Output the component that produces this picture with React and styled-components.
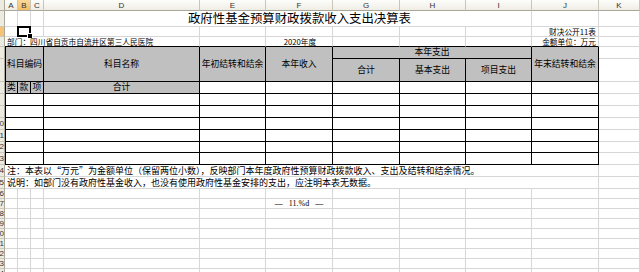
import styled, { createGlobalStyle } from 'styled-components';

const GlobalStyle = createGlobalStyle`
  html, body {
    margin: 0;
    padding: 0;
    background: #fff;
    overflow: hidden;
  }
  body {
    font-family: "Noto Sans CJK SC", "Liberation Sans", sans-serif;
    color: #000;
  }
`;

const COLS = ['A', 'B', 'C', 'D', 'E', 'F', 'G', 'H', 'I', 'J', 'K'];
const col = (l) => COLS.indexOf(l) + 2;

const Sheet = styled.div`
  display: grid;
  grid-template-columns: 5px 13px 13px 13px 156px 66px 67px 67px 66px 66px 67px 41px;
  grid-template-rows: 11px 16px 10px 10px 12px 23px 12px 12px 12px 12px 12px 11px 12px 12px 12px repeat(9, 10px);
  width: 640px;
  height: 272px;
  overflow: hidden;
`;

const Corner = styled.div`
  grid-column: 1;
  grid-row: 1;
  box-sizing: border-box;
  background: #ecebe2;
  border-right: 1px solid #aca899;
  border-bottom: 1px solid #aca899;
`;

const ColHead = styled.div`
  grid-row: 1;
  grid-column: ${(p) => p.$c};
  box-sizing: border-box;
  display: flex;
  align-items: center;
  justify-content: center;
  font-family: "Liberation Sans", "DejaVu Sans", sans-serif;
  font-size: 8px;
  color: #333;
  background: ${(p) =>
    p.$active
      ? 'linear-gradient(#fbd99c, #f5bd66)'
      : 'linear-gradient(#fdfdfb, #eeede5)'};
  border-right: 1px solid #c9c6b6;
  border-bottom: 1px solid #aca899;
`;

const RowHead = styled.div`
  grid-column: 1;
  grid-row: ${(p) => p.$r};
  box-sizing: border-box;
  display: flex;
  align-items: center;
  justify-content: flex-end;
  overflow: hidden;
  font-family: "Liberation Sans", "DejaVu Sans", sans-serif;
  font-size: 8px;
  line-height: 1;
  color: #333;
  background: ${(p) => (p.$active ? '#f7c276' : '#ecebe2')};
  border-right: 1px solid #aca899;
  border-bottom: 1px solid #cbc8b9;
`;

const Cell = styled.div`
  grid-column: ${(p) => p.$c} / span ${(p) => p.$cs || 1};
  grid-row: ${(p) => p.$r} / span ${(p) => p.$rs || 1};
  box-sizing: border-box;
  position: relative;
  display: flex;
  align-items: center;
  justify-content: ${(p) => p.$justify || 'flex-start'};
  min-width: 0;
  white-space: nowrap;
  line-height: 1;
  border-right: 1px solid #d6d6d6;
  border-bottom: 1px solid ${(p) => (p.$ink ? '#000' : '#d6d6d6')};
`;

const HeadCell = styled(Cell)`
  justify-content: center;
  background: #c0c0c0;
  font-size: 8.8px;
  border-right-color: #000;
  border-bottom-color: #000;
  border-left: ${(p) => (p.$first ? '1px solid #000' : 'none')};
`;

const BodyCell = styled(Cell)`
  background: #fff;
  border-right-color: #000;
  border-bottom-color: #000;
  border-left: ${(p) => (p.$first ? '1px solid #000' : 'none')};
`;

const NoteCell = styled(Cell)`
  padding-left: 2px;
  font-size: 9px;
`;

const TitleCell = styled(Cell)`
  justify-content: center;
  padding-left: 24px;
  font-size: 12.4px;
`;

const SmallText = styled.span`
  font-size: 7.7px;
  padding: ${(p) => (p.$right ? '0 2px 0 0' : '0 0 0 2px')};
`;

const PageMark = styled.span`
  display: flex;
  gap: 6px;
  font-family: "Liberation Serif", serif;
  font-size: 8px;
`;

const Selection = styled.div`
  position: absolute;
  top: -1px;
  left: -1px;
  right: -1px;
  bottom: -1px;
  border: 2px solid #000;

  &::after {
    content: '';
    position: absolute;
    right: -4px;
    bottom: -4px;
    width: 4px;
    height: 4px;
    background: #000;
    border: 1px solid #fff;
  }
`;

const excelRow = (line) => {
  if (line <= 5) return line - 1;
  if (line === 6) return null;
  return line;
};

const PlainRow = ({ line, skip = [], children }) => (
  <>
    {COLS.filter((l) => !skip.includes(l)).map((l) => (
      <Cell key={l} $c={col(l)} $r={line} />
    ))}
    {children}
  </>
);

export default function App() {
  const rowLines = Array.from({ length: 23 }, (_, i) => i + 2);
  const dataLines = [8, 9, 10, 11, 12, 13];
  const gridLines = [16, 17, 18, 19, 20, 21, 22, 23, 24];

  return (
    <>
      <GlobalStyle />
      <Sheet>
        <Corner />
        {COLS.map((l) => (
          <ColHead key={l} $c={col(l)} $active={l === 'B'}>
            {l}
          </ColHead>
        ))}
        {rowLines.map((line) => {
          const n = excelRow(line);
          return (
            <RowHead key={line} $r={line} $active={line === 3}>
              {n >= 10 ? n : ''}
            </RowHead>
          );
        })}

        {/* row 1: title */}
        <PlainRow line={2} skip={['D', 'E', 'F', 'G', 'H', 'I']}>
          <TitleCell $c={col('D')} $cs={6} $r={2}>
            政府性基金预算财政拨款收入支出决算表
          </TitleCell>
        </PlainRow>

        {/* row 2 */}
        <PlainRow line={3} skip={['B', 'J']}>
          <Cell $c={col('B')} $r={3}>
            <Selection />
          </Cell>
          <Cell $c={col('J')} $r={3} $justify="flex-end">
            <SmallText $right>财决公开11表</SmallText>
          </Cell>
        </PlainRow>

        {/* row 3 */}
        <Cell $c={col('A')} $cs={4} $r={4} $ink>
          <SmallText>部门：四川省自贡市自流井区第三人民医院</SmallText>
        </Cell>
        <Cell $c={col('E')} $r={4} $ink />
        <Cell $c={col('F')} $r={4} $ink $justify="center">
          <SmallText>2020年度</SmallText>
        </Cell>
        <Cell $c={col('G')} $r={4} $ink />
        <Cell $c={col('H')} $r={4} $ink />
        <Cell $c={col('I')} $r={4} $ink />
        <Cell $c={col('J')} $r={4} $ink $justify="flex-end">
          <SmallText $right>金额单位：万元</SmallText>
        </Cell>
        <Cell $c={col('K')} $r={4} />

        {/* table header */}
        <HeadCell $c={col('A')} $cs={3} $r={5} $rs={2} $first>科目编码</HeadCell>
        <HeadCell $c={col('D')} $r={5} $rs={2}>科目名称</HeadCell>
        <HeadCell $c={col('E')} $r={5} $rs={2}>年初结转和结余</HeadCell>
        <HeadCell $c={col('F')} $r={5} $rs={2}>本年收入</HeadCell>
        <HeadCell $c={col('G')} $cs={3} $r={5}>本年支出</HeadCell>
        <HeadCell $c={col('G')} $r={6}>合计</HeadCell>
        <HeadCell $c={col('H')} $r={6}>基本支出</HeadCell>
        <HeadCell $c={col('I')} $r={6}>项目支出</HeadCell>
        <HeadCell $c={col('J')} $r={5} $rs={2}>年末结转和结余</HeadCell>
        <Cell $c={col('K')} $r={5} />
        <Cell $c={col('K')} $r={6} />

        <HeadCell $c={col('A')} $r={7} $first>类</HeadCell>
        <HeadCell $c={col('B')} $r={7}>款</HeadCell>
        <HeadCell $c={col('C')} $r={7}>项</HeadCell>
        <HeadCell $c={col('D')} $r={7}>合计</HeadCell>
        {['E', 'F', 'G', 'H', 'I', 'J'].map((l) => (
          <BodyCell key={l} $c={col(l)} $r={7} />
        ))}
        <Cell $c={col('K')} $r={7} />

        {/* table body */}
        {dataLines.map((line) => (
          <PlainRow key={line} line={line} skip={COLS.slice(0, 10)}>
            <BodyCell $c={col('A')} $cs={3} $r={line} $first />
            {['D', 'E', 'F', 'G', 'H', 'I', 'J'].map((l) => (
              <BodyCell key={l} $c={col(l)} $r={line} />
            ))}
          </PlainRow>
        ))}

        {/* notes */}
        <NoteCell $c={col('A')} $cs={10} $r={14}>
          注：本表以“万元”为金额单位（保留两位小数），反映部门本年度政府性预算财政拨款收入、支出及结转和结余情况。
        </NoteCell>
        <Cell $c={col('K')} $r={14} />
        <NoteCell $c={col('A')} $cs={10} $r={15}>
          说明：如部门没有政府性基金收入，也没有使用政府性基金安排的支出，应注明本表无数据。
        </NoteCell>
        <Cell $c={col('K')} $r={15} />

        {/* empty sheet */}
        {gridLines.map((line) =>
          line === 17 ? (
            <PlainRow key={line} line={line} skip={['F']}>
              <Cell $c={col('F')} $r={line} $justify="center">
                <PageMark>
                  <span>—</span>
                  <span>11.%d</span>
                  <span>—</span>
                </PageMark>
              </Cell>
            </PlainRow>
          ) : (
            <PlainRow key={line} line={line} />
          )
        )}
      </Sheet>
    </>
  );
}
